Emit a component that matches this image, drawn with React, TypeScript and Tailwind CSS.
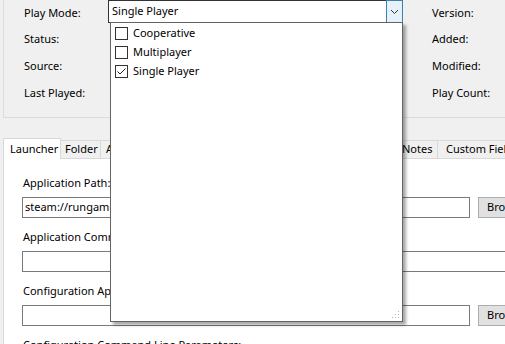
import React from "react";

const FONT = { fontFamily: '"Segoe UI", "Noto Sans", sans-serif' };

const PLAY_MODES = [
  { label: "Cooperative", checked: false },
  { label: "Multiplayer", checked: false },
  { label: "Single Player", checked: true },
];

const LEFT_ROWS = ["Status:", "Source:", "Last Played:"];
const RIGHT_ROWS = ["Added:", "Modified:", "Play Count:"];

// hidden tabs sit under the open dropdown, widths only matter for Notes' position
const TABS = [
  { label: "Folder", w: "w-[40px]", pl: "pl-[4px]" },
  { label: "Additional Apps", w: "w-[96px]", pl: "pl-[5px]" },
  { label: "Media", w: "w-[60px]", pl: "pl-[5px]" },
  { label: "Alternates", w: "w-[70px]", pl: "pl-[5px]" },
  { label: "Controller", w: "w-[69px]", pl: "pl-[5px]" },
  { label: "Notes", w: "w-[42px]", pl: "pl-[6px]" },
  { label: "Custom Fields", w: "w-[90px]", pl: "pl-[8px]" },
];

function Checkbox({ checked }: { checked: boolean }) {
  return (
    <div className="w-[13px] h-[13px] border border-[#333333] bg-white flex items-center justify-center shrink-0">
      {checked && (
        <svg width="11" height="11" viewBox="0 0 11 11">
          <polyline points="1.5,5.5 4,8 9.5,2.5" fill="none" stroke="#222" strokeWidth="1" />
        </svg>
      )}
    </div>
  );
}

function TextBox({ value, wide }: { value?: string; wide?: boolean }) {
  return (
    <div
      className={`h-[21px] shrink-0 border border-[#7a7a7a] bg-white flex items-center px-[2px] ${
        wide ? "w-[500px]" : "w-[448px]"
      }`}
    >
      <span className="whitespace-nowrap">{value}</span>
    </div>
  );
}

function BrowseButton() {
  return (
    <div className="h-[21px] w-[75px] ml-[8px] shrink-0 border border-[#adadad] bg-[#e1e1e1] flex items-center pl-[8px] whitespace-nowrap">
      Browse...
    </div>
  );
}

function Field({
  label,
  value,
  browse,
}: {
  label: string;
  value?: string;
  browse?: boolean;
}) {
  return (
    <div className="flex flex-col mb-[11px]">
      <div className="h-[16px] leading-[16px] pl-[1px] whitespace-nowrap">{label}</div>
      <div className="flex mt-[6px]">
        <TextBox value={value} wide={!browse} />
        {browse && <BrowseButton />}
      </div>
    </div>
  );
}

export default function App() {
  return (
    <div
      className="relative w-[505px] h-[344px] overflow-hidden bg-[#f0f0f0] text-black text-[11px]"
      style={FONT}
    >
      {/* game details group */}
      <div className="ml-[3px] w-[600px] border-l border-b border-[#dcdcdc] pl-[20px] pb-[10px]">
        <div className="flex h-[26px] items-start">
          <div className="w-[84px] h-[26px] flex items-center">Play Mode:</div>
          <div className="w-[295px] h-[23px] border border-[#333333] bg-white flex items-stretch">
            <div className="flex-1 flex items-center pl-[3px]">Single Player</div>
            <div className="w-[17px] -my-px -mr-px border border-[#3c7fb1] bg-[#e5f1fb] flex items-center justify-center">
              <svg width="9" height="6" viewBox="0 0 9 6">
                <polyline points="1,1 4.5,4.5 8,1" fill="none" stroke="#333" strokeWidth="1" />
              </svg>
            </div>
          </div>
          <div className="ml-[29px] h-[26px] flex items-center">Version:</div>
        </div>
        {LEFT_ROWS.map((l, i) => (
          <div key={l} className="flex h-[27px] items-center">
            <div className="w-[408px]">{l}</div>
            <div>{RIGHT_ROWS[i]}</div>
          </div>
        ))}
      </div>

      {/* tabs */}
      <div className="mt-[19px] flex items-end h-[21px] pl-[3px] w-[700px]">
        <div className="h-[21px] w-[58px] shrink-0 -mb-px relative z-10 bg-white border border-b-0 border-[#d9d9d9] flex items-center pl-[6px]">
          Launcher
        </div>
        {TABS.map((t) => (
          <div
            key={t.label}
            className={`h-[18px] ${t.w} ${t.pl} shrink-0 overflow-hidden whitespace-nowrap bg-[#f0f0f0] border border-l-0 border-b-0 border-[#d9d9d9] flex items-center`}
          >
            {t.label}
          </div>
        ))}
      </div>

      {/* launcher page */}
      <div className="ml-[3px] w-[600px] h-[200px] border-t border-l border-[#d9d9d9] bg-white pl-[18px] pt-[16px]">
        <Field label="Application Path:" value="steam://rungameid/255710" browse />
        <Field label="Application Command Line Parameters:" />
        <Field label="Configuration Application Path:" browse />
        <div className="h-[16px] leading-[16px] pl-[1px] whitespace-nowrap">
          Configuration Command Line Parameters:
        </div>
      </div>

      {/* open play mode dropdown */}
      <div className="absolute left-[110px] top-[22px] w-[293px] h-[300px] bg-white border border-[#646464] shadow-[3px_3px_3px_rgba(0,0,0,0.35)] pt-px">
        {PLAY_MODES.map((m) => (
          <div key={m.label} className="h-[19px] flex items-center pl-[4px] gap-[5px]">
            <Checkbox checked={m.checked} />
            <span>{m.label}</span>
          </div>
        ))}
        <svg className="absolute right-[2px] bottom-[2px]" width="8" height="8" viewBox="0 0 8 8">
          <g fill="#b8b8b8">
            <rect x="6" y="0" width="1" height="1" />
            <rect x="3" y="3" width="1" height="1" />
            <rect x="6" y="3" width="1" height="1" />
            <rect x="0" y="6" width="1" height="1" />
            <rect x="3" y="6" width="1" height="1" />
            <rect x="6" y="6" width="1" height="1" />
          </g>
        </svg>
      </div>
    </div>
  );
}
